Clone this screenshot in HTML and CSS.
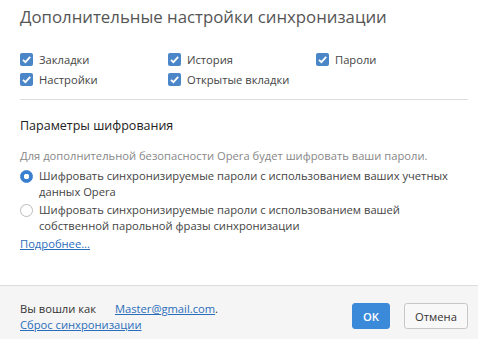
FILE: index.html
```html
<!DOCTYPE html>
<html lang="ru">
<head>
<meta charset="utf-8">
<link rel="stylesheet" href="styles.css">
</head>
<body>
<div class="dialog">
  <div class="content">
    <h1 class="title">Дополнительные настройки синхронизации</h1>
    <div class="checks">
      <label class="check"><span class="box"><svg viewBox="0 0 13 13" width="13" height="13"><path d="M3 6.8 L5.4 9.2 L10.2 3.8" fill="none" stroke="#fff" stroke-width="1.8"/></svg></span>Закладки</label>
      <label class="check"><span class="box"><svg viewBox="0 0 13 13" width="13" height="13"><path d="M3 6.8 L5.4 9.2 L10.2 3.8" fill="none" stroke="#fff" stroke-width="1.8"/></svg></span>История</label>
      <label class="check"><span class="box"><svg viewBox="0 0 13 13" width="13" height="13"><path d="M3 6.8 L5.4 9.2 L10.2 3.8" fill="none" stroke="#fff" stroke-width="1.8"/></svg></span>Пароли</label>
      <label class="check"><span class="box"><svg viewBox="0 0 13 13" width="13" height="13"><path d="M3 6.8 L5.4 9.2 L10.2 3.8" fill="none" stroke="#fff" stroke-width="1.8"/></svg></span>Настройки</label>
      <label class="check"><span class="box"><svg viewBox="0 0 13 13" width="13" height="13"><path d="M3 6.8 L5.4 9.2 L10.2 3.8" fill="none" stroke="#fff" stroke-width="1.8"/></svg></span>Открытые вкладки</label>
    </div>
    <hr class="sep">
    <h2 class="subtitle">Параметры шифрования</h2>
    <p class="note">Для дополнительной безопасности Opera будет шифровать ваши пароли.</p>
    <label class="radio"><span class="dot on"></span><span>Шифровать синхронизируемые пароли с использованием ваших учетных данных Opera</span></label>
    <label class="radio"><span class="dot"></span><span>Шифровать синхронизируемые пароли с использованием вашей собственной парольной фразы синхронизации</span></label>
    <a class="link more" href="#">Подробнее...</a>
  </div>
  <div class="footer">
    <div class="account">
      <div>Вы вошли как <a class="link email" href="#">Master@gmail.com</a>.</div>
      <a class="link" href="#">Сброс синхронизации</a>
    </div>
    <div class="buttons">
      <button class="btn primary">OK</button>
      <button class="btn">Отмена</button>
    </div>
  </div>
</div>
</body>
</html>
```
FILE: styles.css
```css
html, body {
  margin: 0;
  padding: 0;
  background: #fff;
}
body {
  font-family: "Open Sans", "Noto Sans", sans-serif;
  font-size: 11.2px;
  color: #333;
}
.dialog {
  width: 478px;
  height: 339px;
  display: flex;
  flex-direction: column;
}
.content {
  flex: 1;
  padding: 4px 10px 0 20px;
  display: flex;
  flex-direction: column;
}
.title {
  margin: 0;
  font-size: 16.8px;
  font-weight: 400;
  color: #555;
  line-height: 26px;
}
.checks {
  margin-top: 21px;
  display: grid;
  grid-template-columns: 148px 148px 148px;
  row-gap: 4px;
}
.check {
  display: flex;
  align-items: center;
  gap: 6px;
  height: 16px;
  color: #444;
}
.box {
  width: 13px;
  height: 13px;
  border-radius: 2px;
  background: #4a86c8;
  display: flex;
}
.sep {
  margin: 12px 0 0;
  border: 0;
  border-top: 1px solid #ddd;
}
.subtitle {
  margin: 16px 0 0;
  font-size: 12.5px;
  font-weight: 400;
  color: #222;
  line-height: 20px;
}
.note {
  margin: 12px 0 4px;
  color: #888;
  line-height: 16px;
}
.radio {
  display: flex;
  align-items: flex-start;
  gap: 6px;
  line-height: 16px;
  color: #444;
  margin-bottom: 2px;
}
.dot {
  flex: none;
  width: 11px;
  height: 11px;
  margin-top: 2px;
  border-radius: 50%;
  border: 1px solid #bbb;
  background: #fff;
  box-sizing: content-box;
}
.dot.on {
  border-color: #3b7fd0;
  background: radial-gradient(circle, #fff 0 2.5px, #3b7fd0 3px);
}
.link {
  color: #2a6ebb;
  text-decoration: underline;
}
.more {
  margin-top: 0;
  align-self: flex-start;
}
.footer {
  height: 54px;
  background: #f5f5f5;
  border-top: 1px solid #ddd;
  display: flex;
  align-items: flex-start;
  justify-content: space-between;
  padding: 0 10px 0 20px;
  box-sizing: border-box;
}
.account {
  line-height: 16px;
  color: #333;
  padding-top: 15px;
}
.email {
  margin-left: 16px;
}
.buttons {
  display: flex;
  gap: 14px;
  padding-top: 17px;
}
.btn {
  font-family: inherit;
  font-size: 11.2px;
  height: 26px;
  width: 64px;
  padding: 0;
  border: 1px solid #c8c8c8;
  border-radius: 3px;
  background: #f8f8f8;
  color: #333;
}
.btn.primary {
  width: 38px;
  border-color: #3b8ad9;
  background: #3b8ad9;
  color: #fff;
  font-weight: 600;
}
```
